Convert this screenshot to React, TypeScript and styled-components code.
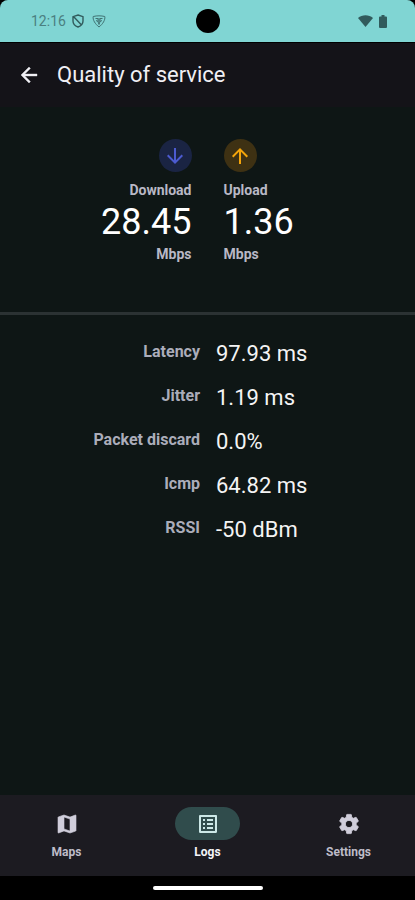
import React from "react";
import styled, { createGlobalStyle } from "styled-components";
import { MdArrowDownward, MdArrowUpward, MdOutlineListAlt } from "react-icons/md";

const GlobalStyle = createGlobalStyle`
  * { box-sizing: border-box; }
  body { margin: 0; background: #000; }
  button { font: inherit; border: 0; padding: 0; background: none; cursor: pointer; }
`;

const Screen = styled.div`
  min-height: 100vh;
  display: flex;
  flex-direction: column;
  background: #000;
  color: #f2f2f2;
  font-family: Roboto, "Liberation Sans", sans-serif;
`;

const StatusBar = styled.div`
  height: 42px;
  display: grid;
  grid-template-columns: 1fr auto 1fr;
  align-items: center;
  background: #80d5d3;
  border-radius: 8px 8px 0 0;
  color: #315b5c;
`;

const StatusGroup = styled.div<{ $end?: boolean }>`
  display: flex;
  align-items: center;
  justify-content: ${(p) => (p.$end ? "flex-end" : "flex-start")};
  padding: ${(p) => (p.$end ? "0 28px 0 0" : "0 0 0 31px")};
  gap: ${(p) => (p.$end ? "6px" : "8px")};
`;

const Clock = styled.time`
  font-size: 14px;
  line-height: 20px;
  color: #4b7f80;
  margin-right: -2px;
`;

const Camera = styled.div`
  width: 24px;
  height: 24px;
  border-radius: 50%;
  background: #000;
`;

const Header = styled.header`
  height: 64px;
  margin-top: 1px;
  padding: 0 16px;
  display: flex;
  align-items: center;
  gap: 16px;
  background: #141318;
`;

const BackButton = styled.button`
  display: flex;
  width: 25px;
  justify-content: center;
  color: #f0eff4;
`;

const Title = styled.h1`
  margin: 0;
  font-size: 22px;
  line-height: 28px;
  font-weight: 400;
  color: #f0eff4;
`;

const Content = styled.main`
  flex: 1;
  background: #0e1615;
`;

const Speeds = styled.section`
  display: grid;
  grid-template-columns: 1fr 1fr;
  gap: 32px;
  padding: 32px 0 48px;
`;

const Speed = styled.div<{ $right?: boolean }>`
  display: flex;
  flex-direction: column;
  align-items: ${(p) => (p.$right ? "flex-end" : "flex-start")};
`;

const Disc = styled.div<{ $bg: string; $fg: string }>`
  width: 33px;
  height: 33px;
  border-radius: 50%;
  display: flex;
  align-items: center;
  justify-content: center;
  background: ${(p) => p.$bg};
  color: ${(p) => p.$fg};
`;

const SpeedLabel = styled.div`
  margin-top: 8px;
  font-size: 14px;
  line-height: 20px;
  font-weight: 700;
  color: #b9b8c5;
`;

const SpeedValue = styled.div`
  font-size: 36px;
  line-height: 44px;
  color: #fff;
`;

const SpeedUnit = styled(SpeedLabel)`
  margin-top: 0;
`;

const Divider = styled.hr`
  height: 3px;
  margin: 0;
  border: 0;
  background: #2b3233;
`;

const Metrics = styled.dl`
  margin: 0;
  padding: 23px 0;
  display: grid;
  grid-template-columns: 200fr 215fr;
  row-gap: 12px;
`;

const MetricName = styled.dt`
  text-align: right;
  font-size: 16px;
  line-height: 28px;
  font-weight: 700;
  color: #abadba;
`;

const MetricValue = styled.dd`
  margin: 0 0 0 16px;
  font-size: 22px;
  line-height: 32px;
  color: #f4f4f4;
`;

const NavBar = styled.nav`
  height: 81px;
  padding-top: 12px;
  display: grid;
  grid-template-columns: repeat(3, 1fr);
  column-gap: 8px;
  background: #1c1b21;
`;

const NavButton = styled.button<{ $active?: boolean }>`
  display: flex;
  flex-direction: column;
  align-items: center;
  gap: 4px;
  color: ${(p) => (p.$active ? "#f4f4f8" : "#bebcc8")};
`;

const Pill = styled.span<{ $active?: boolean }>`
  width: 65px;
  height: 33px;
  border-radius: 17px;
  display: flex;
  align-items: center;
  justify-content: center;
  background: ${(p) => (p.$active ? "#304c4c" : "transparent")};
  color: ${(p) => (p.$active ? "#cce8e7" : "#d0cedb")};
`;

const NavLabel = styled.span`
  font-size: 12px;
  line-height: 16px;
  font-weight: 700;
`;

const GestureArea = styled.div`
  height: 24px;
  display: flex;
  align-items: center;
  justify-content: center;
`;

const GestureBar = styled.div`
  width: 110px;
  height: 4px;
  border-radius: 2px;
  background: #fff;
`;

const ShieldIcon = () => (
  <svg width="12" height="14" viewBox="0 0 12 14" fill="none" stroke="currentColor" strokeWidth="1.4" aria-hidden="true">
    <path d="M6 1 11 2.7V7c0 2.8-2 5-5 6C3 12 1 9.8 1 7V2.7ZM1.5 2.5l8 8.5" />
  </svg>
);

const WebIcon = () => (
  <svg width="14" height="13" viewBox="0 0 14 13" fill="none" stroke="#407273" aria-hidden="true">
    <path d="M1.2 1.5C5 .6 9 .6 12.8 1.5c.6 3.5-2 7.5-5.8 10.5C3.2 9 .6 5 1.2 1.5Z" />
    <path d="M3.5 3.5h2.5v3L7 9.5l1-3v-3h2.5M4 5.5l2 1M10 5.5l-2 1M7 3v4" />
  </svg>
);

const WifiIcon = () => (
  <svg width="15" height="12" viewBox="0 0 15 12" fill="currentColor" aria-hidden="true">
    <path d="M0 3C4-.6 11-.6 15 3L7.5 12Z" />
  </svg>
);

const BatteryIcon = () => (
  <svg width="8" height="13" viewBox="0 0 8 13" fill="currentColor" aria-hidden="true">
    <path d="M2.5 0h3v1.5H7a1 1 0 0 1 1 1V12a1 1 0 0 1-1 1H1a1 1 0 0 1-1-1V2.5a1 1 0 0 1 1-1h1.5Z" />
  </svg>
);

const BackIcon = () => (
  <svg width="24" height="24" viewBox="0 0 24 24" fill="currentColor" stroke="currentColor" strokeWidth="0.4" aria-hidden="true">
    <path d="M20 11H7.83l5.59-5.59L12 4l-8 8 8 8 1.41-1.41L7.83 13H20v-2z" />
  </svg>
);

const MapIcon = () => (
  <svg width="24" height="24" viewBox="0 0 24 24" fill="currentColor" stroke="currentColor" strokeWidth="0.6" aria-hidden="true">
    <path d="M20.5 3l-.16.03L15 5.1 9 3 3.36 4.9c-.21.07-.36.25-.36.48V20.5c0 .28.22.5.5.5l.16-.03L9 18.9l6 2.1 5.64-1.9c.21-.07.36-.25.36-.48V3.5c0-.28-.22-.5-.5-.5zM15 19l-6-2.11V5l6 2.11V19z" />
  </svg>
);

const LogsIcon = () => <MdOutlineListAlt size={24} />;

const SettingsIcon = () => (
  <svg width="24" height="24" viewBox="0 0 24 24" fill="currentColor" stroke="currentColor" strokeWidth="0.8" aria-hidden="true">
    <path d="M19.14 12.94c.04-.3.06-.61.06-.94 0-.32-.02-.64-.07-.94l2.03-1.58a.49.49 0 0 0 .12-.61l-1.92-3.32a.488.488 0 0 0-.59-.22l-2.39.96c-.5-.38-1.03-.7-1.62-.94l-.36-2.54a.484.484 0 0 0-.48-.41h-3.84c-.24 0-.43.17-.47.41l-.36 2.54c-.59.24-1.13.57-1.62.94l-2.39-.96c-.22-.08-.47 0-.59.22L2.74 8.87c-.12.21-.08.47.12.61l2.03 1.58c-.05.3-.09.63-.09.94s.02.64.07.94l-2.03 1.58a.49.49 0 0 0-.12.61l1.92 3.32c.12.22.37.29.59.22l2.39-.96c.5.38 1.03.7 1.62.94l.36 2.54c.05.24.24.41.48.41h3.84c.24 0 .44-.17.47-.41l.36-2.54c.59-.24 1.13-.56 1.62-.94l2.39.96c.22.08.47 0 .59-.22l1.92-3.32c.12-.22.07-.47-.12-.61l-2.01-1.58zM12 15.6c-1.98 0-3.6-1.62-3.6-3.6s1.62-3.6 3.6-3.6 3.6 1.62 3.6 3.6-1.62 3.6-3.6 3.6z" />
  </svg>
);

const metrics = [
  ["Latency", "97.93 ms"],
  ["Jitter", "1.19 ms"],
  ["Packet discard", "0.0%"],
  ["Icmp", "64.82 ms"],
  ["RSSI", "-50 dBm"],
];

const tabs = [
  { name: "Maps", Icon: MapIcon },
  { name: "Logs", Icon: LogsIcon, active: true },
  { name: "Settings", Icon: SettingsIcon },
];

export default function App() {
  return (
    <Screen>
      <GlobalStyle />
      <StatusBar>
        <StatusGroup>
          <Clock>12:16</Clock>
          <ShieldIcon />
          <WebIcon />
        </StatusGroup>
        <Camera />
        <StatusGroup $end>
          <WifiIcon />
          <BatteryIcon />
        </StatusGroup>
      </StatusBar>
      <Header>
        <BackButton aria-label="Back">
          <BackIcon />
        </BackButton>
        <Title>Quality of service</Title>
      </Header>
      <Content>
        <Speeds>
          <Speed $right>
            <Disc $bg="#1a2443" $fg="#4c5bd0">
              <MdArrowDownward size={24} />
            </Disc>
            <SpeedLabel>Download</SpeedLabel>
            <SpeedValue>28.45</SpeedValue>
            <SpeedUnit>Mbps</SpeedUnit>
          </Speed>
          <Speed>
            <Disc $bg="#3e3113" $fg="#f5a50a">
              <MdArrowUpward size={24} />
            </Disc>
            <SpeedLabel>Upload</SpeedLabel>
            <SpeedValue>1.36</SpeedValue>
            <SpeedUnit>Mbps</SpeedUnit>
          </Speed>
        </Speeds>
        <Divider />
        <Metrics>
          {metrics.map(([name, value]) => (
            <React.Fragment key={name}>
              <MetricName>{name}</MetricName>
              <MetricValue>{value}</MetricValue>
            </React.Fragment>
          ))}
        </Metrics>
      </Content>
      <NavBar>
        {tabs.map(({ name, Icon, active }) => (
          <NavButton key={name} $active={active} aria-current={active ? "page" : undefined}>
            <Pill $active={active}>
              <Icon />
            </Pill>
            <NavLabel>{name}</NavLabel>
          </NavButton>
        ))}
      </NavBar>
      <GestureArea>
        <GestureBar />
      </GestureArea>
    </Screen>
  );
}
